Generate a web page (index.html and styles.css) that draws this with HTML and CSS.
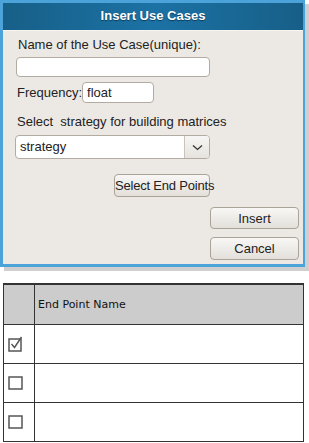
FILE: index.html
```html
<!DOCTYPE html>
<html lang="en">
<head>
    <meta charset="UTF-8">
    <meta name="viewport" content="width=device-width, initial-scale=1.0">
    <title>Insert Use Cases</title>
    <link rel="stylesheet" href="styles.css">
</head>
<body>
    <div class="dialog">
        <div class="dialog-title">Insert Use Cases</div>
        <div class="dialog-body">
            <label class="label name-label">Name of the Use Case(unique):</label>
            <input type="text" class="field name-field">
            <div class="freq-row">
                <label class="label freq-label">Frequency:</label>
                <input type="text" class="field freq-field" value="float">
            </div>
            <label class="label strategy-label">Select&nbsp; strategy for building matrices</label>
            <div class="select">
                <span class="select-value">strategy</span>
                <span class="select-arrow">
                    <svg width="11" height="7" viewBox="0 0 11 7">
                        <path d="M1 1.5 L5.5 5.5 L10 1.5" fill="none" stroke="#333" stroke-width="1.3"/>
                    </svg>
                </span>
            </div>
            <button class="btn endpoints-btn">Select End Points</button>
            <button class="btn side-btn insert-btn">Insert</button>
            <button class="btn side-btn cancel-btn">Cancel</button>
        </div>
    </div>

    <table class="grid">
        <tr class="head">
            <td class="check-col"></td>
            <td>End Point Name</td>
        </tr>
        <tr>
            <td class="check-col">
                <svg class="box" width="16" height="16" viewBox="0 0 16 16">
                    <rect x="1" y="3" width="12" height="12" fill="none" stroke="#555" stroke-width="1.5"/>
                    <path d="M3.5 8 L6.5 11.5 L13.5 1" fill="none" stroke="#555" stroke-width="1.4"/>
                </svg>
            </td>
            <td></td>
        </tr>
        <tr>
            <td class="check-col">
                <svg class="box" width="16" height="16" viewBox="0 0 16 16">
                    <rect x="1" y="2" width="13" height="12" fill="none" stroke="#555" stroke-width="1.5"/>
                </svg>
            </td>
            <td></td>
        </tr>
        <tr>
            <td class="check-col">
                <svg class="box" width="16" height="16" viewBox="0 0 16 16">
                    <rect x="1" y="2" width="13" height="12" fill="none" stroke="#555" stroke-width="1.5"/>
                </svg>
            </td>
            <td></td>
        </tr>
    </table>
</body>
</html>
```

FILE: styles.css
```css
body {
    margin: 0;
    background: #fff;
    font-family: "Liberation Sans", Arial, sans-serif;
    font-size: 13px;
    color: #222;
}
.dialog {
    width: 300px;
    border-style: solid;
    border-color: #4ba3da;
    border-width: 3px 2px 3px 3px;
    box-shadow: 4px 4px 0 #cfcfcf;
    background: #ece9e4;
}
.dialog-title {
    height: 27px;
    line-height: 26px;
    text-align: center;
    color: #fff;
    font-weight: bold;
    font-size: 13px;
    text-shadow: 0 1px 1px #0d3b57;
    background: linear-gradient(to right, #175f88, #1b72a4 50%, #175f88);
    border-bottom: 1px solid #f6f5f2;
}
.dialog-body {
    display: flex;
    flex-direction: column;
    align-items: flex-start;
    padding: 6px 4px 4px 12px;
}
.label {
    line-height: 15px;
    margin-left: 3px;
}
.freq-label {
    margin-left: 2px;
}
.field {
    box-sizing: border-box;
    border: 1px solid #b2aba1;
    border-radius: 4px;
    background: #fff;
    font-family: inherit;
    font-size: 13px;
    color: #222;
    padding: 0 4px;
    margin: 0;
}
.name-field {
    width: 194px;
    height: 20px;
    margin-top: 5px;
    margin-left: 1px;
}
.freq-row {
    display: flex;
    align-items: center;
    margin-top: 5px;
}
.freq-field {
    width: 72px;
    height: 21px;
    margin-left: 0;
}
.strategy-label {
    margin-top: 11px;
    margin-left: 2px;
}
.select {
    box-sizing: border-box;
    display: flex;
    width: 195px;
    height: 24px;
    margin-top: 6px;
    border: 1px solid #b2aba1;
    border-radius: 4px;
    background: #fff;
    overflow: hidden;
}
.select-value {
    flex: 1;
    line-height: 22px;
    padding-left: 4px;
}
.select-arrow {
    width: 24px;
    display: flex;
    align-items: center;
    justify-content: center;
    border-left: 1px solid #c9c3ba;
    background: linear-gradient(#f7f6f4, #e6e3de);
}
.btn {
    box-sizing: border-box;
    font-family: inherit;
    font-size: 13px;
    color: #222;
    border: 1px solid #a9a398;
    border-radius: 4px;
    background: linear-gradient(#f8f7f5, #e3e0db);
    padding: 0;
    white-space: nowrap;
}
.endpoints-btn {
    width: 96px;
    height: 23px;
    margin-top: 15px;
    margin-left: 99px;
    letter-spacing: -0.2px;
}
.side-btn {
    width: 89px;
    align-self: flex-end;
}
.insert-btn {
    height: 22px;
    margin-top: 10px;
}
.cancel-btn {
    height: 23px;
    margin-top: 8px;
}
.grid {
    margin: 16px 0 0 3px;
    width: 301px;
    border-collapse: collapse;
    font-family: "DejaVu Sans", sans-serif;
    font-size: 11px;
    color: #111;
}
.grid td {
    border: 1.5px solid #333;
    height: 38px;
    padding: 0 0 0 3px;
}
.grid .head td {
    background: #cccccc;
    height: 39px;
    border-top-width: 2px;
}
.grid .check-col {
    width: 26px;
    padding: 0 0 0 4px;
}
.box {
    display: block;
}
```
